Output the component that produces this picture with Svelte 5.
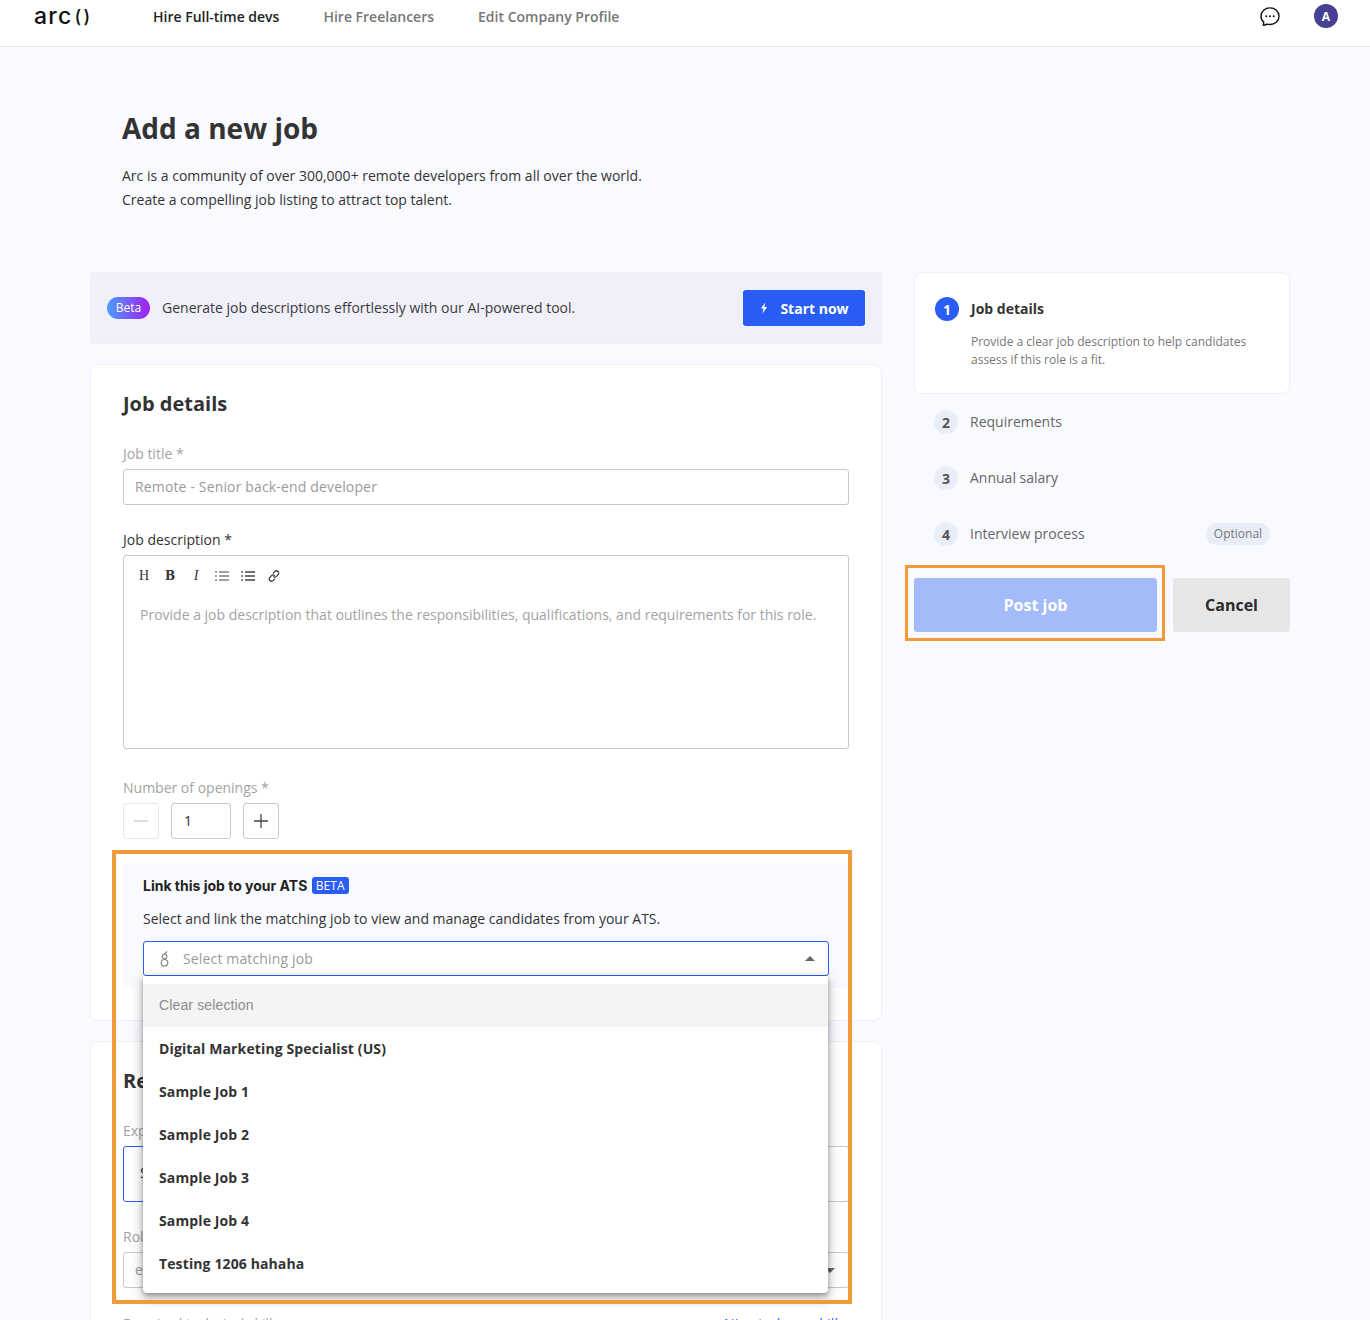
<script>
  const nav = [
    { label: "Hire Full-time devs", active: true },
    { label: "Hire Freelancers" },
    { label: "Edit Company Profile" },
  ];
  const jobs = [
    "Digital Marketing Specialist (US)",
    "Sample Job 1",
    "Sample Job 2",
    "Sample Job 3",
    "Sample Job 4",
    "Testing 1206 hahaha",
  ];
  const steps = [
    { n: 2, label: "Requirements" },
    { n: 3, label: "Annual salary" },
    { n: 4, label: "Interview process", optional: true },
  ];
  const levels = ["Senior", "Mid-level", "Junior"];
</script>

<div class="page">
  <header class="topbar">
    <span class="logo">arc<span class="parens">()</span></span>
    <nav class="nav">
      {#each nav as item}
        <span class="nav-item" class:active={item.active}>{item.label}</span>
      {/each}
    </nav>
    <div class="top-right">
      <svg class="chat" width="22" height="22" viewBox="0 0 22 22" fill="none" stroke="#111" stroke-width="1.4">
        <path d="M4.2 20.2c1.4 0 2.7-.4 3.6-1.1.9.3 2 .4 3.2.4 4.9 0 9-3.3 9-8.3s-4-8.300-9-8.300-9 3.400-9 8.300c0 2.500 1 4.600 2.800 6 0 1-.3 2-.6 3z" stroke-linejoin="round"/>
        <circle cx="7.300" cy="11.200" r="1" fill="#111" stroke="none"/>
        <circle cx="11" cy="11.200" r="1" fill="#111" stroke="none"/>
        <circle cx="14.700" cy="11.200" r="1" fill="#111" stroke="none"/>
      </svg>
      <span class="avatar">A</span>
    </div>
  </header>

  <section class="intro">
    <h1>Add a new job</h1>
    <p>Arc is a community of over 300,000+ remote developers from all over the world.<br />Create a compelling job listing to attract top talent.</p>
  </section>

  <div class="columns">
    <main class="left">
      <div class="banner">
        <span class="beta">Beta</span>
        <span class="banner-text">Generate job descriptions effortlessly with our AI-powered tool.</span>
        <button class="start">
          <svg width="10" height="12" viewBox="0 0 10 12" fill="#fff"><path d="M6.200 .5 1.800 6.600h2.700L3.400 11.500 8.200 4.900H5.300z"/></svg>
          Start now
        </button>
      </div>

      <div class="card details">
        <h2>Job details</h2>
        <label class="label">Job title *</label>
        <div class="input placeholder">Remote - Senior back-end developer</div>

        <label class="label dark desc-label">Job description *</label>
        <div class="editor">
          <div class="toolbar">
            <span class="tool">H</span>
            <span class="tool bold">B</span>
            <span class="tool italic">I</span>
            <svg width="14" height="12" viewBox="0 0 14 12" stroke="#444" stroke-width="1.200" fill="none">
              <path d="M4 2h10M4 6h10M4 10h10M0 2h2M0 6h2M0 10h2"/>
            </svg>
            <svg width="14" height="12" viewBox="0 0 14 12" stroke="#444" stroke-width="1.300" fill="none">
              <path d="M4 2h10M4 6h10M4 10h10"/>
              <circle cx="1" cy="2" r=".9" fill="#444" stroke="none"/>
              <circle cx="1" cy="6" r=".9" fill="#444" stroke="none"/>
              <circle cx="1" cy="10" r=".9" fill="#444" stroke="none"/>
            </svg>
            <svg class="link-icon" width="12" height="12" viewBox="0 0 12 12" stroke="#333" stroke-width="1.200" fill="none">
              <path d="M5 3.300 6.800 1.600a2.200 2.200 0 0 1 3.300 3.100L8.500 6.400a2.200 2.200 0 0 1-3.200 0"/>
              <path d="M7 8.700 5.200 10.400a2.200 2.200 0 0 1-3.300-3.100L3.500 5.600a2.200 2.200 0 0 1 3.200 0"/>
            </svg>
          </div>
          <p class="editor-placeholder">Provide a job description that outlines the responsibilities, qualifications, and requirements for this role.</p>
        </div>

        <label class="label openings-label">Number of openings *</label>
        <div class="stepper">
          <span class="step-btn off"><svg width="16" height="16" viewBox="0 0 16 16" stroke="#ccc" stroke-width="1.300"><path d="M1 8h14"/></svg></span>
          <span class="count">1</span>
          <span class="step-btn"><svg width="16" height="16" viewBox="0 0 16 16" stroke="#444" stroke-width="1.300"><path d="M1 8h14M8 1v14"/></svg></span>
        </div>

        <div class="ats">
          <div class="frame ats-frame"></div>
          <div class="ats-title">Link this job to your ATS <span class="ats-badge">BETA</span></div>
          <p class="ats-text">Select and link the matching job to view and manage candidates from your ATS.</p>
          <div class="ats-select">
            <svg width="12" height="18" viewBox="0 0 12 18" fill="none" stroke="#888" stroke-width="1.200">
              <circle cx="5.500" cy="12.800" r="3.300"/>
              <circle cx="5.500" cy="6.500" r="2.300"/>
              <path d="M8 1.500 5.500 4.200M5.500 9.300v.3"/>
            </svg>
            <span class="ats-placeholder">Select matching job</span>
            <span class="caret up"></span>
            <div class="menu">
              <div class="menu-clear">Clear selection</div>
              {#each jobs as job}
                <div class="menu-item">{job}</div>
              {/each}
            </div>
          </div>
        </div>
      </div>

      <div class="card reqs">
        <h2>Requirements</h2>
        <label class="label">Experience level *</label>
        <div class="levels">
          {#each levels as level, i}
            <span class="level" class:selected={i === 0}>{level}</span>
          {/each}
        </div>
        <label class="label role-label">Role *</label>
        <div class="input placeholder role">e.g. Back-end developer<span class="caret down"></span></div>
        <div class="skills-row">
          <span class="label">Required technical skills</span>
          <span class="nice">+ Nice-to-have skills</span>
        </div>
      </div>
    </main>

    <aside class="right">
      <div class="step-card">
        <div class="step-head">
          <span class="num current">1</span>
          <span class="step-title">Job details</span>
        </div>
        <p class="step-desc">Provide a clear job description to help candidates assess if this role is a fit.</p>
      </div>
      <div class="step-list">
        {#each steps as s}
          <div class="step">
            <span class="num">{s.n}</span>
            <span class="step-label">{s.label}</span>
            {#if s.optional}<span class="optional">Optional</span>{/if}
          </div>
        {/each}
      </div>
      <div class="actions">
        <div class="post-wrap">
          <div class="frame post-frame"></div>
          <button class="post">Post job</button>
        </div>
        <button class="cancel">Cancel</button>
      </div>
    </aside>
  </div>
</div>

<style>
  :global(body) {
    margin: 0;
    background: #f9faff;
  }

  .page {
    height: 1320px;
    overflow: hidden;
    font-family: "Open Sans", "Noto Sans", sans-serif;
    color: #2f2f2f;
    background: #f9faff;
  }

  /* top bar */
  .topbar {
    display: flex;
    align-items: flex-start;
    height: 46px;
    background: #fff;
    border-bottom: 1px solid #e9e9ee;
    padding: 0 32px 0 34px;
  }
  .logo {
    width: 119px;
    font-family: "Inter", sans-serif;
    font-size: 23px;
    font-weight: 500;
    line-height: 32px;
    color: #111;
    letter-spacing: 1.200px;
  }
  .parens {
    margin-left: 2px;
    font-size: 18px;
    letter-spacing: 2.500px;
    vertical-align: 1px;
  }
  .nav {
    display: flex;
    gap: 44px;
    font-size: 14px;
    line-height: 34px;
    font-weight: 600;
    color: #767676;
  }
  .nav-item.active {
    color: #222;
  }
  .top-right {
    margin-left: auto;
    display: flex;
    align-items: center;
    gap: 33px;
    height: 32px;
  }
  .avatar {
    width: 24px;
    height: 24px;
    border-radius: 50%;
    background: #473f91;
    color: #fff;
    font-size: 12px;
    font-weight: 700;
    display: flex;
    align-items: center;
    justify-content: center;
  }

  /* intro */
  .intro {
    padding: 64px 0 0 122px;
    height: 178px;
    box-sizing: border-box;
    margin-bottom: 47px;
  }
  h1 {
    margin: 0;
    font-size: 28px;
    line-height: 34px;
    font-weight: 700;
    color: #333;
  }
  .intro p {
    margin: 19px 0 0;
    font-size: 14px;
    line-height: 24px;
    color: #333;
  }

  .columns {
    display: flex;
    gap: 32px;
    padding-left: 90px;
    width: 1200px;
  }
  .left {
    width: 792px;
    flex: none;
  }

  /* banner */
  .banner {
    display: flex;
    align-items: center;
    height: 72px;
    box-sizing: border-box;
    padding: 0 16px;
    background: #f0f0fb;
    border: 1px solid #eeeef8;
    border-radius: 4px;
    margin-bottom: 20px;
  }
  .beta {
    width: 43px;
    height: 22px;
    line-height: 21px;
    text-align: center;
    font-size: 12px;
    font-weight: 500;
    color: #fff;
    border-radius: 11px;
    background: linear-gradient(90deg, #4a9dff, #a21fec);
  }
  .banner-text {
    margin: 0 0 2px 12px;
    font-size: 14px;
    color: #3a3a3a;
  }
  .start {
    margin-left: auto;
    width: 122px;
    height: 36px;
    display: flex;
    align-items: center;
    justify-content: center;
    gap: 11px;
    border: 0;
    border-radius: 3px;
    background: #2a5cf6;
    color: #fff;
    font-family: inherit;
    font-size: 14px;
    font-weight: 700;
  }

  /* cards */
  .card {
    box-sizing: border-box;
    background: #fff;
    border: 1px solid #eeeff7;
    border-radius: 8px;
    padding: 0 32px;
  }
  .details {
    height: 657px;
    margin-bottom: 20px;
  }
  h2 {
    margin: 0;
    padding-top: 24px;
    font-size: 20px;
    line-height: 30px;
    font-weight: 700;
    color: #333;
  }
  .label {
    display: block;
    font-size: 14px;
    line-height: 20px;
    color: #a3a3a3;
    margin: 0;
  }
  .details h2 + .label {
    margin-top: 25px;
  }
  .label.dark {
    color: #333;
  }
  .input {
    height: 36px;
    box-sizing: border-box;
    margin-top: 5px;
    padding: 0 11px;
    border: 1px solid #c8c8c8;
    border-radius: 3px;
    font-size: 14px;
    line-height: 34px;
    letter-spacing: 0.15px;
    background: #fff;
    position: relative;
  }
  .placeholder {
    color: #9a9a9a;
  }
  .desc-label {
    margin-top: 25px;
  }
  .editor {
    height: 194px;
    box-sizing: border-box;
    margin-top: 5px;
    border: 1px solid #c8c8c8;
    border-radius: 3px;
    padding: 13px 16px;
  }
  .toolbar {
    display: grid;
    grid-auto-flow: column;
    grid-auto-columns: 14px;
    column-gap: 12px;
    align-items: center;
    justify-items: center;
    justify-content: start;
    height: 14px;
    margin-left: -3px;
  }
  .tool {
    font-family: "Liberation Serif", serif;
    font-size: 14px;
    line-height: 14px;
    color: #333;
  }
  .tool.bold {
    font-weight: 700;
    font-family: "DejaVu Serif", serif;
    font-size: 12px;
  }
  .tool.italic {
    font-style: italic;
  }
  .editor-placeholder {
    margin: 22px 0 0;
    font-size: 14px;
    line-height: 20px;
    color: #a3a3a3;
  }
  .openings-label {
    margin-top: 29px;
  }
  .stepper {
    display: flex;
    gap: 12px;
    margin-top: 5px;
  }
  .step-btn {
    width: 36px;
    height: 36px;
    box-sizing: border-box;
    display: flex;
    align-items: center;
    justify-content: center;
    border: 1px solid #c8c8c8;
    border-radius: 3px;
  }
  .step-btn.off {
    border-color: #e8e8e8;
  }
  .count {
    width: 60px;
    height: 36px;
    box-sizing: border-box;
    border: 1px solid #c8c8c8;
    border-radius: 3px;
    padding-left: 12px;
    font-size: 14px;
    line-height: 34px;
  }

  /* ATS box */
  .ats {
    position: relative;
    height: 125px;
    box-sizing: border-box;
    margin-top: 24px;
    padding: 13px 20px 0;
    background: #f9faff;
    border-radius: 4px;
  }
  .frame {
    position: absolute;
    box-sizing: border-box;
    border-style: solid;
    border-color: #f2993a;
    pointer-events: none;
    z-index: 6;
  }
  .ats-frame {
    top: -13px;
    left: -11px;
    width: 740px;
    height: 454px;
    border-width: 4px;
  }
  .ats-title {
    font-family: "Inter", sans-serif;
    font-size: 14px;
    line-height: 20px;
    font-weight: 700;
    color: #222;
  }
  .ats-badge {
    display: inline-block;
    margin-left: 1px;
    padding: 0 4px;
    height: 17px;
    line-height: 17px;
    font-size: 12px;
    font-weight: 400;
    letter-spacing: 0.1px;
    color: #fff;
    background: #2a5cf6;
    border-radius: 3px;
    font-family: "Open Sans", sans-serif;
    vertical-align: 1px;
  }
  .ats-text {
    margin: 13px 0 0;
    font-size: 14px;
    line-height: 20px;
    color: #333;
  }
  .ats-select {
    position: relative;
    display: flex;
    align-items: center;
    height: 35px;
    box-sizing: border-box;
    margin-top: 12px;
    padding: 0 13px 0 15px;
    background: #fff;
    border: 1px solid #2a5cf6;
    border-radius: 3px;
  }
  .ats-placeholder {
    margin-left: 12px;
    font-size: 14px;
    letter-spacing: 0.15px;
    color: #9a9a9a;
  }
  .caret {
    width: 0;
    height: 0;
    border-left: 5px solid transparent;
    border-right: 5px solid transparent;
  }
  .caret.up {
    margin-left: auto;
    border-bottom: 5px solid #666;
  }
  .caret.down {
    position: absolute;
    right: 13px;
    top: 15px;
    border-top: 5px solid #666;
  }
  .menu {
    position: absolute;
    top: calc(100% + 1px);
    left: -1px;
    width: 685px;
    padding: 8px 0;
    background: #fff;
    border-radius: 0 0 4px 4px;
    box-shadow: 0 2px 4px rgba(0, 0, 0, 0.3), 0 8px 10px 1px rgba(0, 0, 0, 0.12), 0 3px 14px 2px rgba(0, 0, 0, 0.12);
    z-index: 5;
  }
  .menu-clear {
    height: 43px;
    padding-left: 16px;
    line-height: 43px;
    background: #f4f4f4;
    font-family: "Liberation Sans", sans-serif;
    font-size: 14px;
    letter-spacing: 0.14px;
    color: #8c8c8c;
  }
  .menu-item {
    height: 43px;
    padding-left: 16px;
    line-height: 43px;
    font-size: 14px;
    font-weight: 700;
    letter-spacing: 0.12px;
    color: #333;
  }

  /* requirements card, mostly hidden under the menu */
  .reqs {
    height: 320px;
  }
  .reqs h2 + .label {
    margin-top: 25px;
  }
  .levels {
    display: flex;
    height: 56px;
    margin-top: 5px;
  }
  .level {
    flex: 1;
    box-sizing: border-box;
    padding-left: 16px;
    border: 1px solid #c8c8c8;
    border-left-width: 0;
    font-size: 14px;
    line-height: 52px;
  }
  .level:last-child {
    border-radius: 0 3px 3px 0;
  }
  .level.selected {
    border: 1px solid #2a5cf6;
    border-radius: 3px 0 0 3px;
  }
  .role-label {
    margin-top: 25px;
  }
  .skills-row {
    display: flex;
    justify-content: space-between;
    margin-top: 26px;
  }
  .nice {
    margin-right: 4px;
    font-size: 14px;
    line-height: 20px;
    letter-spacing: 0.2px;
    color: #2a5cf6;
  }

  /* right column */
  .right {
    width: 376px;
    flex: none;
  }
  .step-card {
    height: 122px;
    box-sizing: border-box;
    padding: 24px 20px 0;
    background: #fff;
    border: 1px solid #eeeff7;
    border-radius: 8px;
  }
  .step-head {
    display: flex;
    align-items: center;
    gap: 12px;
  }
  .num {
    width: 24px;
    height: 24px;
    border-radius: 50%;
    flex: none;
    display: flex;
    align-items: center;
    justify-content: center;
    background: #e9edf7;
    color: #555;
    font-size: 14px;
    font-weight: 700;
  }
  .num.current {
    background: #2a5cf6;
    color: #fff;
  }
  .step-title {
    margin-bottom: 2px;
    font-size: 14px;
    font-weight: 700;
    color: #333;
  }
  .step-desc {
    margin: 12px 0 0 36px;
    font-size: 12px;
    line-height: 18px;
    color: #777;
  }
  .step-list {
    padding: 0 20px;
  }
  .step {
    height: 56px;
    display: flex;
    align-items: center;
    gap: 12px;
  }
  .step-label {
    margin-bottom: 2px;
    font-size: 14px;
    color: #666;
  }
  .optional {
    margin-left: auto;
    width: 64px;
    height: 22px;
    line-height: 21px;
    text-align: center;
    border-radius: 11px;
    background: #e9edf7;
    font-size: 12px;
    color: #777;
  }
  .actions {
    display: flex;
    gap: 16px;
    margin-top: 16px;
  }
  .post-wrap {
    position: relative;
  }
  .post-frame {
    top: -13px;
    left: -9px;
    width: 260px;
    height: 76px;
    border-width: 3px;
  }
  button {
    font-family: inherit;
  }
  .post,
  .cancel {
    height: 54px;
    border: 0;
    border-radius: 3px;
    font-size: 16px;
    font-weight: 700;
    display: block;
  }
  .post {
    width: 243px;
    background: #a4bbfa;
    color: #fff;
  }
  .cancel {
    width: 117px;
    background: #e6e6e6;
    color: #2b2b2b;
  }
</style>
